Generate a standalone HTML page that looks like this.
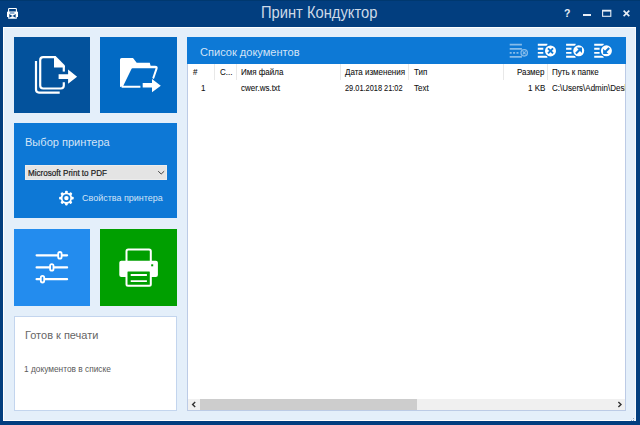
<!DOCTYPE html>
<html><head><meta charset="utf-8">
<style>
*{box-sizing:border-box;margin:0;padding:0}
html,body{width:640px;height:425px;overflow:hidden;background:#023e7f;font-family:"Liberation Sans",sans-serif}
.a{position:absolute}
.t{position:absolute;white-space:nowrap;line-height:1}
#body{left:3px;top:27px;width:633px;height:394px;background:#e4effa;border-left:1px solid #fff;border-right:1px solid #f6f9fd;border-top:1px solid #fff;border-bottom:1px solid #fff}
#t1{left:14px;top:37px;width:76px;height:76px;background:#03529c}
#t2{left:100px;top:37px;width:77px;height:76px;background:#026ac4}
#pp{left:14px;top:123px;width:163px;height:95px;background:#0d78d6}
#t3{left:14px;top:229px;width:76px;height:77px;background:#238cee}
#t4{left:100px;top:229px;width:77px;height:77px;background:#009f00}
#st{left:14px;top:316px;width:163px;height:95px;background:#fff;border:1px solid #c3d5ee}
#rp{left:187px;top:37px;width:439px;height:374px;background:#fff;border:1px solid #bccbe6;border-top:none}
#rh{left:187px;top:37px;width:439px;height:26.6px;background:#0d79d6}
.hd{font-size:8.6px;transform:scaleX(0.93);transform-origin:0 0;color:#111;-webkit-text-stroke:0.08px #111}
.sep{position:absolute;top:64px;width:1px;height:16px;background:#e8e8e8}
#sb{left:188px;top:399px;width:437px;height:11px;background:#f0f0f0}
#thumb{left:200px;top:399px;width:217px;height:11px;background:#cdcdcd}
</style></head><body>
<div class="a" id="body"></div>
<div class="a" style="left:0;top:0;width:640px;height:1px;background:#00386f"></div>

<!-- title bar -->
<div class="t" style="left:261px;top:5.2px;font-size:16px;color:#cdd9e7;transform:scaleX(0.92);transform-origin:0 0">Принт Кондуктор</div>

<div class="a" id="t1"></div>
<div class="a" id="t2"></div>
<div class="a" id="pp"></div>
<div class="t" style="left:25px;top:135.9px;font-size:11.7px;color:#d3e4f7;transform:scaleX(0.945);transform-origin:0 0">Выбор принтера</div>
<div class="a" style="left:25px;top:165px;width:142px;height:15px;background:#e4e4e4;border:1px solid #ececec"></div>
<div class="t" style="left:27.5px;top:168.6px;font-size:8.7px;color:#1a1a1a;transform:scaleX(0.93);transform-origin:0 0;-webkit-text-stroke:0.2px #1a1a1a">Microsoft Print to PDF</div>
<div class="t" style="left:82px;top:193.6px;font-size:9.3px;color:#d3e4f7;transform:scaleX(0.965);transform-origin:0 0">Свойства принтера</div>

<div class="a" id="t3"></div>
<div class="a" id="t4"></div>

<div class="a" id="st"></div>
<div class="t" style="left:25px;top:329.7px;font-size:11px;color:#666">Готов к печати</div>
<div class="t" style="left:23.8px;top:365.1px;font-size:9px;color:#5a5a5a;transform:scaleX(0.925);transform-origin:0 0">1 документов в списке</div>

<div class="a" id="rp"></div>
<div class="a" id="rh"></div>
<div class="t" style="left:200px;top:46px;font-size:11.7px;color:#d3e4f7;transform:scaleX(0.945);transform-origin:0 0">Список документов</div>

<div class="sep" style="left:214px"></div>
<div class="sep" style="left:236px"></div>
<div class="sep" style="left:340px"></div>
<div class="sep" style="left:408px"></div>
<div class="sep" style="left:503px"></div>
<div class="sep" style="left:547px"></div>
<div class="t hd" style="left:192.5px;top:68px">#</div>
<div class="t hd" style="left:220px;top:68px">С...</div>
<div class="t hd" style="left:240.5px;top:68px">Имя файла</div>
<div class="t hd" style="left:344.5px;top:68px">Дата изменения</div>
<div class="t hd" style="left:413.7px;top:68px">Тип</div>
<div class="t hd" style="left:517px;top:68px">Размер</div>
<div class="t hd" style="left:552px;top:68px">Путь к папке</div>

<div class="t hd" style="left:201.4px;top:83.8px">1</div>
<div class="t hd" style="left:240.5px;top:83.8px">cwer.ws.txt</div>
<div class="t hd" style="left:344.5px;top:83.8px;transform:scaleX(0.86);transform-origin:0 0">29.01.2018 21:02</div>
<div class="t hd" style="left:413.5px;top:83.8px">Text</div>
<div class="t hd" style="left:527.5px;top:83.8px">1 KB</div>
<div class="a" style="left:552px;top:80px;width:73px;height:12px;overflow:hidden"><div class="t hd" style="left:0;top:3.8px">C:\Users\Admin\Desktop</div></div>

<div class="a" id="sb"></div>
<div class="a" id="thumb"></div>

<svg class="a" style="left:0;top:0" width="640" height="425" viewBox="0 0 640 425">
 <!-- title icon -->
 <rect x="8.6" y="8.5" width="7.8" height="4" rx="0.6" fill="none" stroke="#fff" stroke-width="1.1"/>
 <path d="M7,12.3 Q7,11.4 7.9,11.4 H17.1 Q18,11.4 18,12.3 V17 H16.8 V18.8 H8.2 V17 H7 Z" fill="#fff"/>
 <rect x="9.8" y="12.4" width="4.6" height="1.2" fill="#5080b5"/>
 <path d="M9.3,14.1 L12.5,15.9 L15.7,14.1 V17.7 L12.5,15.9 L9.3,17.7 Z" fill="#023e7f"/>
 <!-- window controls -->
 <text x="564" y="17.3" font-family="Liberation Sans" font-size="10.5" font-weight="bold" fill="#e8eef6">?</text>
 <rect x="583" y="14" width="8" height="2" fill="#e8eef6"/>
 <rect x="602.6" y="10.3" width="8.2" height="6" fill="none" stroke="#e8eef6" stroke-width="1.1"/>
 <rect x="602.6" y="10" width="8.2" height="1.6" fill="#e8eef6"/>
 <path d="M623.6,10.6 L629.3,16.1 M629.3,10.6 L623.6,16.1" stroke="#e8eef6" stroke-width="1.6"/>

 <!-- T1 icon -->
 <g fill="none" stroke="#fff" stroke-width="2.2">
  <path d="M36,61 V89.6 Q36,92.6 39,92.6 H59.7"/>
  <path d="M54.9,57.2 H43.2 Q40.2,57.2 40.2,60.2 V85.5 Q40.2,88.5 43.2,88.5 H60.8 Q63.8,88.5 63.8,85.5 V82.2"/>
  <path d="M63.8,71.6 V66.3"/>
 </g>
 <path d="M54,56 H55.6 L65,65.6 V67.4 H54 Z" fill="#fff"/>
 <path d="M58.6,74.2 H68.1 V69.5 L77.1,76.8 L68.1,83.8 V79 H58.6 Z" fill="#fff"/>

 <!-- T2 icon -->
 <path d="M120,59.6 Q120,58 121.6,58 H133 L136.7,62.8 H149.8 L150.6,65.7 H155 Q158.4,65.7 157.5,69 L151.3,86.5 H121.6 Q120,87.7 120,86.1 Z" fill="#fff"/>
 <path d="M121.6,86.1 H151.3 L151,87.7 H121.6 Z" fill="#fff"/>
 <path d="M132.6,68.3 H155.6 L149.6,85.7 H123.3 L131.2,69.4 Q131.7,68.3 132.6,68.3 Z" fill="#026ac4"/>
 <path d="M140.4,80.8 H150.2 V76.4 L163.4,85.7 L150.2,95.2 V89.8 H140.4 Z" fill="#026ac4"/>
 <path d="M142.7,83.1 H152 V79 L160.8,85.7 L152,92.3 V87.5 H142.7 Z" fill="#fff"/>

 <!-- gear -->
 <g transform="translate(66.4,198.1)">
  <g fill="#fff">
   <circle r="5.7"/>
   <rect x="-1.35" y="-7.3" width="2.7" height="14.6" rx="0.8"/>
   <rect x="-1.35" y="-7.3" width="2.7" height="14.6" rx="0.8" transform="rotate(45)"/>
   <rect x="-1.35" y="-7.3" width="2.7" height="14.6" rx="0.8" transform="rotate(90)"/>
   <rect x="-1.35" y="-7.3" width="2.7" height="14.6" rx="0.8" transform="rotate(135)"/>
  </g>
  <circle r="3.9" fill="#0d78d6"/>
  <circle r="2.2" fill="#fff"/>
 </g>
 <!-- combobox chevron -->
 <path d="M158.2,171.2 L161.2,174 L164.2,171.2" fill="none" stroke="#444" stroke-width="1"/>

 <!-- sliders -->
 <g stroke="#fff" stroke-width="2.2" stroke-linecap="round">
  <path d="M36.6,255.3 H67.1 M36.6,267.4 H67.1 M36.6,279.2 H67.1"/>
 </g>
 <g fill="#238cee" stroke="#fff" stroke-width="1.8">
  <rect x="58.2" y="252" width="3.4" height="6.6" rx="1.7"/>
  <rect x="50.1" y="264.1" width="3.4" height="6.6" rx="1.7"/>
  <rect x="40.8" y="275.9" width="3.4" height="6.6" rx="1.7"/>
 </g>

 <!-- printer -->
 <rect x="126.5" y="249.4" width="24.3" height="14" rx="1.8" fill="none" stroke="#fff" stroke-width="2"/>
 <rect x="119.3" y="260.7" width="38.6" height="16.2" rx="2" fill="#fff"/>
 <rect x="151.2" y="264.3" width="2" height="2" fill="#009f00"/>
 <rect x="126.5" y="270.6" width="24.3" height="15.2" rx="1.5" fill="#009f00" stroke="#fff" stroke-width="2"/>
 <path d="M130.7,275 H146.9 M130.7,281.1 H146.9" stroke="#fff" stroke-width="1.8"/>

 <!-- header icons -->
 <g fill="none" stroke="#fff" stroke-width="1.8">
  <g opacity="0.5">
   <path d="M509.7,44.6 H521.9 M509.7,48.8 H521.9 M509.7,56.9 H521.9"/>
   <path d="M509.7,52.8 H519.6" stroke-dasharray="2 1.4"/>
   <circle cx="524.2" cy="52.8" r="3.2" stroke-width="1.3"/>
   <path d="M522.7,51.3 L525.7,54.3 M525.7,51.3 L522.7,54.3" stroke-width="1.2"/>
  </g>
 </g>
 <g id="hic">
  <path d="M537.8,44.7 H547.4 M537.8,48.8 H543.3 M537.8,52.9 H543.3 M537.8,56.8 H547.4" stroke="#fff" stroke-width="1.9"/>
  <circle cx="550.5" cy="50.9" r="6.6" fill="#0d79d6"/>
  <circle cx="550.5" cy="50.9" r="5.5" fill="#fff"/>
  <path d="M548,48.4 L553,53.4 M553,48.4 L548,53.4" stroke="#0d79d6" stroke-width="2"/>
 </g>
 <g>
  <path d="M566.1,44.7 H575.6 M566.1,48.8 H571.5 M566.1,52.9 H571.5 M566.1,56.8 H575.6" stroke="#fff" stroke-width="1.9"/>
  <circle cx="578.7" cy="50.8" r="6.6" fill="#0d79d6"/>
  <circle cx="578.7" cy="50.8" r="5.5" fill="#fff"/>
  <path d="M575.9,53.6 L580.2,49.3" stroke="#0d79d6" stroke-width="2.1"/>
  <path d="M576.6,47.5 H582 V52.9 Z" fill="#0d79d6"/>
 </g>
 <g>
  <path d="M594.2,44.7 H603.7 M594.2,48.8 H599.6 M594.2,52.9 H599.6 M594.2,56.8 H603.7" stroke="#fff" stroke-width="1.9"/>
  <circle cx="606.4" cy="50.8" r="6.6" fill="#0d79d6"/>
  <circle cx="606.4" cy="50.8" r="5.5" fill="#fff"/>
  <path d="M609.2,48 L604.9,52.3" stroke="#0d79d6" stroke-width="2.1"/>
  <path d="M603.1,48.7 V54.1 H608.5 Z" fill="#0d79d6"/>
 </g>
 <!-- resize grip -->
 <g fill="#8fa9c8">
  <rect x="633" y="418" width="1" height="1"/><rect x="631" y="420" width="1" height="1"/><rect x="633" y="420" width="1" height="1"/>
 </g>
 <!-- scrollbar arrows -->
 <path d="M195.2,401.9 L192.6,404.4 L195.2,406.9" fill="none" stroke="#333" stroke-width="1.4"/>
 <path d="M618.4,401.9 L621,404.4 L618.4,406.9" fill="none" stroke="#333" stroke-width="1.4"/>
</svg>
</body></html>
